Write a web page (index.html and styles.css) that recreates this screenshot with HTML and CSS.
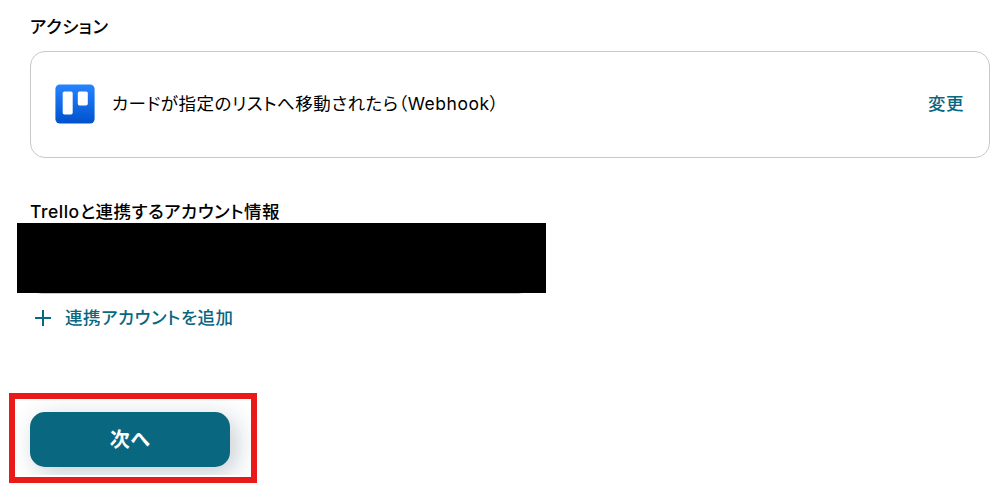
FILE: index.html
```
<!DOCTYPE html>
<html lang="ja">
<head>
  <meta charset="utf-8">
  <title>アクション</title>
  <link rel="stylesheet" href="styles.css">
</head>
<body class="body">
<div class="label">アクション</div>
<div class="card">
  <svg class="logo" width="40" height="40" viewBox="0 0 40 40">
    <defs>
      <linearGradient id="blue" x1="0" y1="0" x2="0" y2="1">
        <stop offset="0" stop-color="#2684ff"/>
        <stop offset="1" stop-color="#0052cc"/>
      </linearGradient>
    </defs>
    <rect x="0.4" y="0.4" width="39.2" height="39.2" rx="4.5" fill="url(#blue)"/>
    <rect x="7.7" y="7.4" width="10" height="23" rx="1.7" fill="#fff"/>
    <rect x="22.8" y="7.4" width="10" height="14" rx="1.7" fill="#fff"/>
  </svg>
  <span class="name">カードが指定のリストへ移動されたら（Webhook）</span>
  <a class="link">変更</a>
</div>
<div class="label account">Trelloと連携するアカウント情報</div>
<div class="field"><div class="mask"></div></div>
<a class="link add">
  <svg width="18" height="18" viewBox="0 0 18 18">
    <path d="M9 1v16M1 9h16" fill="none" stroke="#0a6780" stroke-width="2"/>
  </svg>
  <span>連携アカウントを追加</span>
</a>
<button class="next">次へ</button>
<div class="frame"></div>
</body>
</html>
```

FILE: styles.css
```
.body { margin:0; padding:15px 16px 0 30px; height:475px; box-sizing:border-box; overflow:hidden; background:#fff; color:#000; font-family:Inter,"Noto Sans CJK JP",sans-serif; font-size:17.5px; line-height:24px; letter-spacing:0.52px; font-feature-settings:"palt"; }
.label { height:24px; font-weight:500; }
.card { display:flex; align-items:center; box-sizing:border-box; height:107px; margin-top:12px; padding:0 25px 2px 24px; border:1px solid #c8c8c8; border-radius:15px; }
.logo { display:block; margin-right:17px; }
.name { flex:1; }
.link { color:#0a6780; font-weight:500; }
.account { margin-top:42px; }
.field { position:relative; box-sizing:border-box; width:500px; height:57px; margin-top:13px; border:1px solid #c8c8c8; border-radius:12px; }
.mask { position:absolute; left:-14px; top:-15px; width:529px; height:70px; background:#000; }
.add { display:flex; align-items:center; gap:13px; margin-top:12px; padding-left:4px; }
.next { display:block; width:200px; height:55px; margin-top:82px; padding:1px 0 0; border:0; border-radius:15px; background:#0a6780; color:#fff; font:bold 20px/54px Inter,"Noto Sans CJK JP",sans-serif; letter-spacing:0.5px; font-feature-settings:"palt"; box-shadow:6px 6px 24px rgba(20,50,70,.25); }
.frame { position:absolute; left:9px; top:393px; box-sizing:border-box; width:248px; height:90px; border:6px solid #e81a1a; }
```
